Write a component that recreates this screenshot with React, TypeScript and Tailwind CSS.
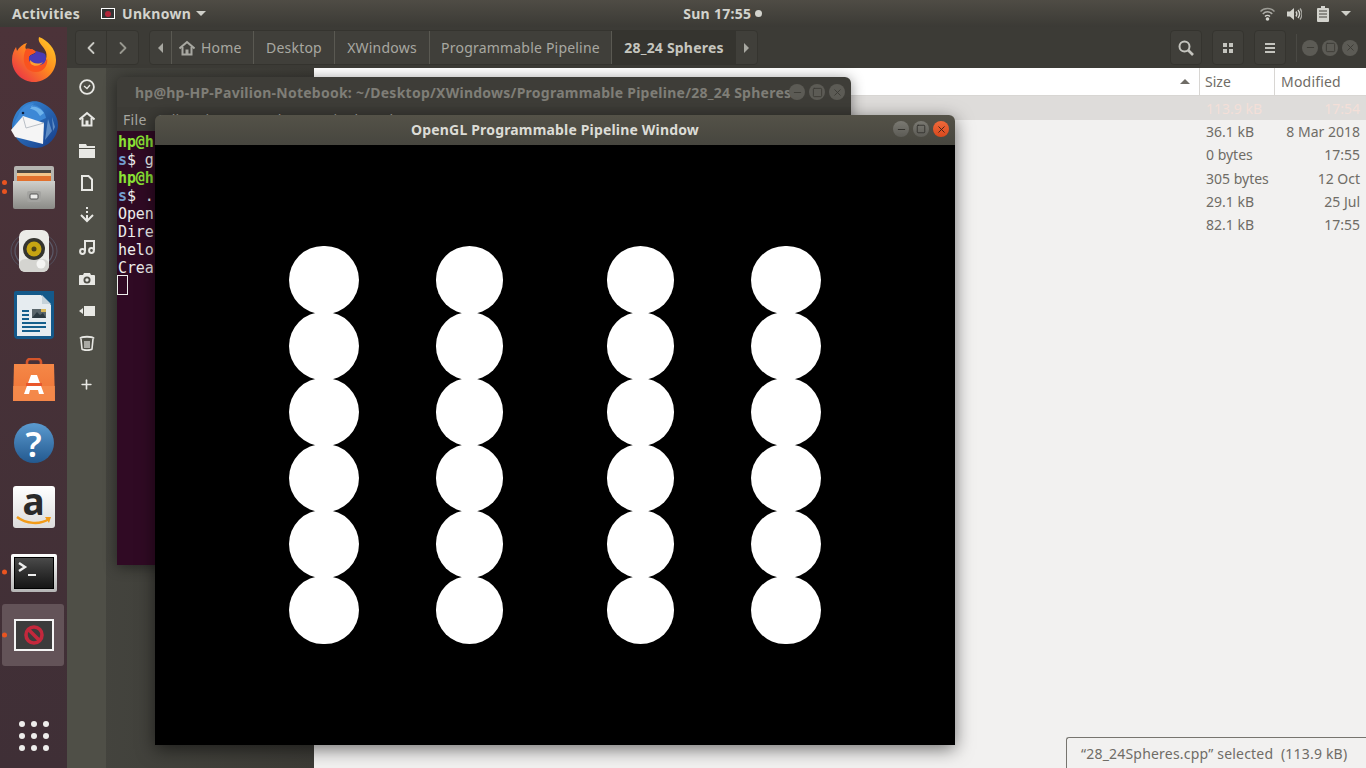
import type { ReactNode } from "react";
import { ChevronLeft, ChevronRight, Plus, Minus, Square, X } from "lucide-react";

const ui = { fontFamily: '"Noto Sans", sans-serif' };

const crumbs = [
  { label: "Desktop", w: "w-[81px]" },
  { label: "XWindows", w: "w-[95px]" },
  { label: "Programmable Pipeline", w: "w-[182px]" },
];

const files = [
  ["113.9 kB", "17:54"],
  ["36.1 kB", "8 Mar 2018"],
  ["0 bytes", "17:55"],
  ["305 bytes", "12 Oct"],
  ["29.1 kB", "25 Jul"],
  ["82.1 kB", "17:55"],
];

const spheres = [
  { w: "w-[70px]", ml: "ml-[134px]" },
  { w: "w-[67px]", ml: "ml-[77px]" },
  { w: "w-[67px]", ml: "ml-[104px]" },
  { w: "w-[70px]", ml: "ml-[77px]" },
];

// dock icons

function Firefox() {
  return (
    <svg width="44" height="45" viewBox="0 0 44 45">
      <defs>
        <linearGradient id="ff" x1="1" y1="0" x2="0" y2="1">
          <stop offset="0" stopColor="#ffd42a" />
          <stop offset="0.45" stopColor="#ff8a1e" />
          <stop offset="1" stopColor="#e6224f" />
        </linearGradient>
      </defs>
      <path d="M27 0c8 3 17 11 17 23 0 12-10 22-22 22S0 35 0 23c0-6 2-10 4-13l1 4c2-4 6-7 10-8-2 3-2 5-1 6 3-1 8 0 10 3-3 2-6 2-7 5-1 4 3 8 9 8 6 0 10-6 8-13-2-6-9-9-7-15z" fill="url(#ff)" />
      <path d="M14 12c3-1 8 0 10 3-3 2-6 2-7 5-1 4 3 8 9 8 5 0 8-3 9-7 1 5-1 10-6 13-5 2-12 1-15-4-3-5-3-12 0-18z" fill="#f9531f" />
      <path d="M24 14c2 1 6 1 9 3 2 4 1 8-2 10-4 2-10 1-13-2-2-3-1-6 1-7 3-1 5-2 5-4z" fill="#4a3bb5" />
      <path d="M18 23c2 3 8 5 13 2-2 4-9 5-12 2-1-1-1-3-1-4z" fill="#ffa033" />
    </svg>
  );
}

function Thunderbird() {
  return (
    <svg width="48" height="49" viewBox="0 0 48 49">
      <defs>
        <linearGradient id="tb" x1="0" y1="0" x2="1" y2="1">
          <stop offset="0" stopColor="#3a8fdc" />
          <stop offset="1" stopColor="#153a86" />
        </linearGradient>
      </defs>
      <path d="M10 9C15 3 25 0 32 4c9 4 16 12 16 22 0 12-10 23-22 23-8 0-14-3-19-9L2 29c0-8 3-15 8-20z" fill="url(#tb)" />
      <path d="M8 17c2-6 8-13 16-13l-2 2c7 0 13 6 14 13L12 30 4 28c0-4 2-8 4-11z" fill="#3d88d6" />
      <path d="M24 5l-3 3c3-1 9 0 13 6l-4 3C27 12 24 10 20 10z" fill="#6fb4ec" />
      <path d="M1 31l12-14 21 7-1 21-28-7z" fill="#f5f5f5" />
      <path d="M13 18l3 11 18-5" fill="none" stroke="#b9bfc6" strokeWidth="1" />
      <path d="M38 20l4 12-7 9z M42 18l3 10-2 4z" fill="#8fbbe6" opacity="0.55" />
      <circle cx="13" cy="14" r="1.3" fill="#0f2140" />
    </svg>
  );
}

function FileCabinet() {
  return (
    <svg width="42" height="43" viewBox="0 0 42 43">
      <defs>
        <linearGradient id="fc" x1="0" y1="0" x2="0" y2="1">
          <stop offset="0" stopColor="#cfcfcb" />
          <stop offset="1" stopColor="#8b8b87" />
        </linearGradient>
      </defs>
      <rect x="1" y="0" width="40" height="20" rx="2" fill="#b5b5b1" />
      <rect x="4" y="4" width="34" height="10" fill="#4a4540" />
      <rect x="4" y="7" width="34" height="3" fill="#f2c48a" />
      <rect x="4" y="10" width="34" height="5" fill="#e2702c" />
      <path d="M0 15h42v26a2 2 0 0 1-2 2H2a2 2 0 0 1-2-2z" fill="url(#fc)" />
      <rect x="14" y="25" width="14" height="11" rx="2" fill="#a3a3a0" />
      <rect x="17" y="28" width="8" height="5" rx="1" fill="#ececea" stroke="#555" strokeWidth="1" />
    </svg>
  );
}

function Speaker() {
  return (
    <svg width="48" height="44" viewBox="0 0 48 44">
      <ellipse cx="24" cy="22" rx="23" ry="19" fill="none" stroke="#5d6b80" strokeWidth="1" opacity="0.55" />
      <ellipse cx="24" cy="22" rx="19" ry="16" fill="none" stroke="#6b7a90" strokeWidth="1.2" opacity="0.55" />
      <rect x="9" y="1" width="30" height="42" rx="7" fill="#ebebe7" />
      <rect x="9" y="30" width="30" height="13" rx="6" fill="#d4d4d0" />
      <circle cx="24" cy="20" r="11" fill="#35352f" />
      <circle cx="24" cy="20" r="7.5" fill="#c6a512" />
      <circle cx="24" cy="20" r="2.5" fill="#4d4419" />
      <circle cx="31" cy="35" r="4.5" fill="#f4f4f2" />
    </svg>
  );
}

function Writer() {
  return (
    <svg width="40" height="48" viewBox="0 0 40 48">
      <path d="M2 0h38v44a4 4 0 0 1-4 4H4a4 4 0 0 1-4-4V2a2 2 0 0 1 2-2z" fill="#14598a" />
      <path d="M3 4h24l10 10v31H3z" fill="#e6ecf0" />
      <path d="M28 4l9 9h-9z" fill="#c5d2da" />
      <rect x="18" y="18" width="14" height="9" fill="#59656b" />
      <path d="M18 27l5-6 3 3 3-2 3 5z" fill="#2c3a42" />
      <rect x="27" y="18" width="5" height="3" fill="#d8b758" />
      <path d="M8 19h7v2H8zM8 23h7v2H8zM8 27h7v2H8zM8 31h24v2H8zM8 35h24v2H8zM8 39h18v2H8z" fill="#155f8c" />
    </svg>
  );
}

function Store() {
  return (
    <svg width="42" height="43" viewBox="0 0 42 43">
      <defs>
        <linearGradient id="st" x1="0" y1="0" x2="0" y2="1">
          <stop offset="0" stopColor="#f58847" />
          <stop offset="1" stopColor="#ee7135" />
        </linearGradient>
      </defs>
      <path d="M14 11V4a3 3 0 0 1 3-3h8a3 3 0 0 1 3 3v7" fill="none" stroke="#d4552a" strokeWidth="2.6" />
      <path d="M1 6h40l1 37H0z" fill="url(#st)" />
      <rect y="28" width="42" height="15" fill="#f58f50" opacity="0.75" />
      <path d="M18 17h6l7 19h-5l-1-4h-8l-1 4h-5z" fill="#fff" />
      <rect x="13" y="25" width="16" height="3" fill="#e9572b" />
    </svg>
  );
}

function Help() {
  return (
    <div className="flex h-[40px] w-[40px] items-center justify-center rounded-full bg-gradient-to-b from-[#5b9bd0] to-[#23598f] text-[35px] font-semibold leading-none text-white" style={ui}>
      ?
    </div>
  );
}

function Amazon() {
  return (
    <div className="flex h-[42px] w-[42px] flex-col items-center rounded-[3px] bg-gradient-to-b from-white to-[#dcdcdc]">
      <span className="mt-[-3px] text-[37px] font-bold leading-[36px] text-[#2a2a2a]" style={ui}>a</span>
      <svg width="36" height="10" viewBox="0 0 36 10" className="mt-[-3px]">
        <path d="M1 1c9 7 23 8 32 2" fill="none" stroke="#f29b18" strokeWidth="2.4" />
        <path d="M29 1l6 0-2 6z" fill="#f29b18" />
      </svg>
    </div>
  );
}

function TerminalIcon() {
  return (
    <div className="mt-[2px] h-[38px] w-[46px] rounded-[2px] bg-gradient-to-b from-white to-[#b5b5b5] p-[3px]">
      <div className="h-full w-full border border-black bg-gradient-to-b from-[#4a4a4a] to-[#151515] p-[2px]">
        <svg width="30" height="22" viewBox="0 0 30 22">
          <path d="M2 3l6 4-6 4" fill="none" stroke="#eee" strokeWidth="2.4" />
          <rect x="11" y="14" width="8" height="2" fill="#eee" />
        </svg>
      </div>
    </div>
  );
}

function GlIcon() {
  return (
    <svg width="40" height="32" viewBox="0 0 40 32">
      <rect x="1" y="1" width="38" height="30" fill="#3c3c3c" stroke="#f4f4f4" strokeWidth="2" />
      <circle cx="20" cy="16" r="8" fill="none" stroke="#c4283c" strokeWidth="3.6" />
      <path d="M14.5 10.5l11 11" stroke="#c4283c" strokeWidth="3.6" />
    </svg>
  );
}

function DockItem({ children, dots = 0, active, h = "h-[64px]" }: { children: ReactNode; dots?: number; active?: boolean; h?: string }) {
  return (
    <div className={`relative flex w-[67px] items-center justify-center ${h}`}>
      {active && <div className="absolute inset-y-0 left-[2px] right-[3px] rounded-[3px] bg-[#635358]" />}
      <div className="relative flex items-center justify-center">{children}</div>
      {dots > 0 && (
        <div className="absolute left-[2px] top-1/2 flex -translate-y-1/2 flex-col gap-[4px]">
          {Array.from({ length: dots }).map((_, i) => (
            <span key={i} className="h-[5px] w-[5px] rounded-full bg-[#e95420]" />
          ))}
        </div>
      )}
    </div>
  );
}

function Dock() {
  return (
    <aside className="flex w-[67px] shrink-0 flex-col items-center bg-gradient-to-b from-[#4c3339] to-[#3f2f36] pb-[17px]">
      <DockItem><Firefox /></DockItem>
      <DockItem><Thunderbird /></DockItem>
      <DockItem dots={2}><FileCabinet /></DockItem>
      <DockItem><Speaker /></DockItem>
      <DockItem><Writer /></DockItem>
      <DockItem><Store /></DockItem>
      <DockItem><Help /></DockItem>
      <DockItem><Amazon /></DockItem>
      <DockItem dots={1} h="h-[65px]"><TerminalIcon /></DockItem>
      <DockItem dots={1} active h="h-[62px]"><GlIcon /></DockItem>
      <div className="mt-auto grid grid-cols-3 gap-[6px]">
        {Array.from({ length: 9 }).map((_, i) => (
          <span key={i} className="h-[6px] w-[6px] rounded-full bg-[#eeeeec]" />
        ))}
      </div>
    </aside>
  );
}

// symbolic icons, the gnome ones are heavier than lucide

function HomeGlyph({ size = 16 }: { size?: number }) {
  return (
    <svg width={size} height={size} viewBox="0 0 16 16" fill="none" stroke="currentColor" strokeWidth="2">
      <path d="M0.5 8.5L8 2l7.5 6.5" />
      <path d="M3.5 7v7.5h9V7" />
      <rect x="6.5" y="9.5" width="3" height="5" fill="currentColor" stroke="none" />
    </svg>
  );
}

const placeIcons: ReactNode[] = [
  <svg key="recent" width="16" height="16" viewBox="0 0 16 16" fill="none" stroke="currentColor" strokeWidth="1.8">
    <circle cx="8" cy="8" r="6.9" />
    <path d="M5 7l3 2.5L11 6" strokeWidth="1.3" />
  </svg>,
  <HomeGlyph key="home" />,
  <svg key="folder" width="16" height="16" viewBox="0 0 16 16" fill="currentColor">
    <path d="M0 1h7l1 2h8v2H0z" />
    <rect y="6" width="16" height="9" />
  </svg>,
  <svg key="file" width="16" height="16" viewBox="0 0 16 16" fill="none" stroke="currentColor" strokeWidth="2">
    <path d="M3 1h6.5L13 4.5V15H3z" />
  </svg>,
  <svg key="download" width="16" height="16" viewBox="0 0 16 16" fill="none" stroke="currentColor" strokeWidth="2">
    <path d="M8 0v2M8 4v2M8 8v5" />
    <path d="M2 8l6 6 6-6" />
  </svg>,
  <svg key="music" width="16" height="16" viewBox="0 0 16 16" fill="none" stroke="currentColor" strokeWidth="2">
    <circle cx="3.5" cy="12.5" r="2.4" />
    <circle cx="12.5" cy="11.5" r="2.4" />
    <path d="M6 12V2h9v9" />
  </svg>,
  <svg key="camera" width="16" height="16" viewBox="0 0 16 16">
    <path d="M5 2h6l1 2h3a1 1 0 0 1 1 1v9H0V5a1 1 0 0 1 1-1h3z" fill="currentColor" />
    <circle cx="8" cy="9" r="3.5" fill="#4f4f47" />
    <circle cx="8" cy="9" r="1.7" fill="currentColor" />
  </svg>,
  <svg key="video" width="16" height="16" viewBox="0 0 16 16" fill="currentColor">
    <rect x="5" y="3" width="11" height="10" />
    <path d="M0 8l4-3v6z" />
  </svg>,
  <svg key="trash" width="16" height="16" viewBox="0 0 16 16" fill="none" stroke="currentColor" strokeWidth="1.6">
    <path d="M1 3.5C3 1 13 1 15 3.5" strokeWidth="2" />
    <path d="M2 4l1 10c1 1.500 9 1.500 10 0l1-10" />
    <path d="M6 6v7M8 6v7M10 6v7" strokeWidth="1.2" />
  </svg>,
];

function WinButton({ children, tone }: { children: ReactNode; tone: string }) {
  return <span className={`flex h-[16px] w-[16px] items-center justify-center rounded-full ${tone}`}>{children}</span>;
}

function TopBar() {
  return (
    <header className="flex h-[27px] shrink-0 items-center bg-gradient-to-b from-[#4f4c45] to-[#3b3a35] text-[14px] font-bold tracking-[0.3px] text-[#d3d3cd]" style={ui}>
      <span className="ml-[12px]">Activities</span>
      <span className="ml-[21px] flex h-[11px] w-[14px] items-center justify-center border border-white bg-[#333]">
        <span className="h-[6px] w-[6px] rounded-full bg-[#b3263a]" />
      </span>
      <span className="ml-[7px]">Unknown</span>
      <span className="ml-[5px] h-0 w-0 border-x-[5px] border-t-[5px] border-x-transparent border-t-[#cfcfc9]" />
      <span className="ml-[477px]">Sun 17:55</span>
      <span className="ml-[4px] h-[7px] w-[7px] rounded-full bg-[#d3d3cd]" />
      <div className="ml-auto mr-[15px] flex items-center">
        <svg width="15" height="14" viewBox="0 0 15 14" fill="none" stroke="currentColor">
          <path d="M0.500 4.500C4 0.500 11 0.500 14.500 4.500" strokeWidth="1.4" opacity="0.6" />
          <path d="M2.800 7C5.500 4 9.500 4 12.200 7" strokeWidth="1.4" opacity="0.75" />
          <path d="M5 9.500C6.500 8 8.500 8 10 9.500" strokeWidth="1.4" />
          <circle cx="7.500" cy="12" r="1.800" fill="currentColor" stroke="none" />
        </svg>
        <svg width="15" height="14" viewBox="0 0 15 14" fill="none" stroke="currentColor" className="ml-[12px]">
          <path d="M0 4.500h3L7 1v12L3 9.500H0z" fill="currentColor" stroke="none" />
          <path d="M9 4.500c1 1.500 1 3.500 0 5" strokeWidth="1.4" />
          <path d="M11 3c2 2.500 2 5.500 0 8" strokeWidth="1.4" />
          <path d="M13 1.500c2.500 3.500 2.500 7.500 0 11" strokeWidth="1.3" opacity="0.7" />
        </svg>
        <svg width="12" height="16" viewBox="0 0 12 16" className="ml-[15px]">
          <path d="M4 0h4v2h3a1 1 0 0 1 1 1v12a1 1 0 0 1-1 1H1a1 1 0 0 1-1-1V3a1 1 0 0 1 1-1h3z" fill="currentColor" />
          <path d="M2 5h8M2 8h8M2 11h8" stroke="#45433d" strokeWidth="1" />
        </svg>
        <span className="ml-[12px] h-0 w-0 border-x-[5px] border-t-[5px] border-x-transparent border-t-[#cfcfc9]" />
      </div>
    </header>
  );
}

function IconButton({ children }: { children: ReactNode }) {
  return <div className="flex h-[35px] w-[32px] items-center justify-center rounded-[4px] border border-[#35342f] bg-[#403f3a] text-[#c4c4be]">{children}</div>;
}

function Toolbar() {
  return (
    <div className="flex h-[41px] shrink-0 items-center bg-[#3c3b36] pl-[8px] text-[14px] tracking-[0.2px] text-[#a8a8a1]" style={ui}>
      <div className="flex h-[35px] w-[64px] rounded-[4px] border border-[#35342f] bg-[#403f3a]">
        <div className="flex w-[31px] items-center justify-center border-r border-[#35342f] text-[#c9c9c3]"><ChevronLeft size={20} strokeWidth={2.2} /></div>
        <div className="flex flex-1 items-center justify-center text-[#98988f]"><ChevronRight size={20} strokeWidth={2.2} /></div>
      </div>
      <div className="ml-[10px] flex h-[35px] items-stretch rounded-[4px] border border-[#35342f] bg-[#403f3a]">
        <div className="flex w-[22px] items-center justify-center border-r border-[#5a5952]">
          <span className="h-0 w-0 border-y-[5px] border-r-[5px] border-y-transparent border-r-[#a8a8a1]" />
        </div>
        <div className="flex w-[82px] items-center gap-[6px] border-r border-[#5a5952] pl-[7px]"><HomeGlyph />Home</div>
        {crumbs.map((c) => (
          <div key={c.label} className={`flex items-center justify-center border-r border-[#5a5952] ${c.w}`}>{c.label}</div>
        ))}
        <div className="flex w-[124px] items-center justify-center bg-[#35342f] font-bold text-[#c6c6bf]">28_24 Spheres</div>
        <div className="flex w-[21px] items-center justify-center">
          <span className="h-0 w-0 border-y-[5px] border-l-[5px] border-y-transparent border-l-[#a8a8a1]" />
        </div>
      </div>
      <div className="ml-auto mr-[8px] flex items-center">
        <div className="flex gap-[10px]">
          <IconButton>
            <svg width="16" height="16" viewBox="0 0 16 16" fill="none" stroke="currentColor">
              <circle cx="6.500" cy="6.500" r="5" strokeWidth="2" />
              <path d="M10 10l5 5" strokeWidth="2.6" />
            </svg>
          </IconButton>
          <IconButton>
            <span className="grid grid-cols-2 gap-[2px]">
              {[0, 1, 2, 3].map((i) => <span key={i} className="h-[4px] w-[4px] bg-[#c4c4be]" />)}
            </span>
          </IconButton>
          <IconButton>
            <span className="flex flex-col gap-[2px]">
              {[0, 1, 2].map((i) => <span key={i} className="h-[2px] w-[10px] bg-[#c4c4be]" />)}
            </span>
          </IconButton>
        </div>
        <span className="ml-[10px] h-[28px] w-px bg-[#4a4944]" />
        <div className="ml-[5px] flex gap-[4px]">
          {[Minus, Square, X].map((Icon, i) => (
            <WinButton key={i} tone="bg-[#5c5b55] text-[#3c3b36]"><Icon size={11} /></WinButton>
          ))}
        </div>
      </div>
    </div>
  );
}

function Places() {
  return (
    <div className="flex w-[247px] shrink-0 bg-gradient-to-r from-[#45453f] to-[#3c3b36]">
      <div className="flex w-[39px] flex-col items-center bg-[#4f4f47] pt-[3px] text-[#e8e8e4]">
        {placeIcons.map((icon, i) => (
          <div key={i} className="flex h-[32px] items-center justify-center">{icon}</div>
        ))}
        <div className="mt-[9px] flex h-[32px] items-center justify-center"><Plus size={15} strokeWidth={2.6} /></div>
      </div>
    </div>
  );
}

function FileList() {
  return (
    <main className="relative flex-1 bg-[#f2f1f0] text-[14px] text-[#6f6c66]" style={ui}>
      <div className="flex h-[28px] items-center border-b border-[#d8d6d3] bg-white">
        <div className="flex flex-1 justify-end pr-[9px]">
          <span className="h-0 w-0 border-x-[5px] border-b-[5px] border-x-transparent border-b-[#6f6c66]" />
        </div>
        <div className="flex h-full w-[76px] items-center border-x border-[#d8d6d3] pl-[5px]">Size</div>
        <div className="w-[91px] pl-[6px] tracking-[0.2px]">Modified</div>
      </div>
      {files.map(([size, when], i) => (
        <div key={when + size} className={i === 0 ? "flex h-[24px] items-center bg-[#dedcda] text-[#f3dfd8]" : "flex h-[23.3px] items-center"}>
          <div className="flex-1" />
          <div className="w-[76px] pl-[7px]">{size}</div>
          <div className="w-[91px] pr-[6px] text-right">{when}</div>
        </div>
      ))}
      <div className="absolute bottom-0 right-0 flex h-[31px] w-[300px] items-center whitespace-pre rounded-tl-[3px] border-l border-t border-[#77756f] bg-[#f2f1f0] pl-[14px] tracking-[0.2px] text-[#6f6c66]">
        “28_24Spheres.cpp” selected  (113.9 kB)
      </div>
    </main>
  );
}

function TerminalWindow() {
  const lines = [
    [<span key="a" className="font-bold text-[#8ae234]">hp@h</span>],
    [<span key="b" className="font-bold text-[#729fcf]">s</span>, "$ g"],
    [<span key="c" className="font-bold text-[#8ae234]">hp@h</span>],
    [<span key="d" className="font-bold text-[#729fcf]">s</span>, "$ ."],
    ["Open"],
    ["Dire"],
    ["helo"],
    ["Crea"],
  ];
  return (
    <section className="absolute left-[117px] top-[77px] flex h-[488px] w-[734px] flex-col overflow-hidden rounded-t-[6px] shadow-[0_2px_14px_rgba(0,0,0,0.45)]">
      <div className="relative flex h-[30px] shrink-0 items-center bg-[#3e3d38] pl-[18px] text-[14px] font-bold tracking-[0.25px] text-[#7f7e77]" style={ui}>
        <span className="whitespace-nowrap">hp@hp-HP-Pavilion-Notebook: ~/Desktop/XWindows/Programmable Pipeline/28_24 Spheres</span>
        <div className="absolute right-[6px] top-[7px] flex gap-[4px]">
          {[Minus, Square, X].map((Icon, i) => (
            <WinButton key={i} tone="bg-[#5c5b55] text-[#3c3b36]"><Icon size={11} /></WinButton>
          ))}
        </div>
      </div>
      <div className="flex h-[24px] shrink-0 items-center gap-[12px] bg-[#3c3b36] pl-[6px] pt-[1px] text-[14px] tracking-[0.3px] text-[#a8a8a1]" style={ui}>
        <span>File</span>
        <span>Edit</span>
        <span>View</span>
        <span>Search</span>
        <span>Terminal</span>
        <span>Help</span>
      </div>
      <div className="flex-1 bg-[#300a24] pt-[2px] text-[15px] leading-[18px] text-[#eeeeec]" style={{ fontFamily: '"DejaVu Sans Mono", monospace' }}>
        {lines.map((l, i) => <div key={i} className="pl-px tracking-[-0.1px]">{l}</div>)}
        <div className="-mt-[2px] h-[20px] w-[11px] border border-[#eeeeec]" />
      </div>
    </section>
  );
}

function GlWindow() {
  return (
    <section className="absolute left-[155px] top-[115px] flex w-[800px] flex-col overflow-hidden rounded-t-[6px] shadow-[0_4px_18px_rgba(0,0,0,0.55)]">
      <div className="relative flex h-[30px] items-center justify-center bg-gradient-to-b from-[#545248] to-[#47463f] pb-[2px] text-[14px] font-bold tracking-[0.17px] text-[#dcdcd6]" style={ui}>
        OpenGL Programmable Pipeline Window
        <div className="absolute right-[6px] top-[6px] flex gap-[4px]">
          <WinButton tone="bg-gradient-to-b from-[#7a7972] to-[#5c5b55] text-[#2f2e2a]"><Minus size={11} /></WinButton>
          <WinButton tone="bg-gradient-to-b from-[#7a7972] to-[#5c5b55] text-[#2f2e2a]"><Square size={10} /></WinButton>
          <WinButton tone="bg-gradient-to-b from-[#f0693a] to-[#d9481c] text-[#3a2018]"><X size={11} /></WinButton>
        </div>
      </div>
      <div className="flex h-[600px] items-start bg-black pt-[101px]">
        {spheres.map((s, c) => (
          <div key={c} className={`flex flex-col ${s.ml}`}>
            {[0, 1, 2, 3, 4, 5].map((r) => (
              <div key={r} className={`h-[68px] rounded-full bg-white ${r ? "-mt-[2px]" : ""} ${s.w}`} />
            ))}
          </div>
        ))}
      </div>
    </section>
  );
}

export default function App() {
  return (
    <div className="relative flex h-[768px] w-[1366px] flex-col overflow-hidden bg-[#3f3e39]">
      <TopBar />
      <div className="flex flex-1">
        <Dock />
        <div className="flex flex-1 flex-col">
          <Toolbar />
          <div className="flex flex-1">
            <Places />
            <FileList />
          </div>
        </div>
      </div>
      <TerminalWindow />
      <GlWindow />
    </div>
  );
}
